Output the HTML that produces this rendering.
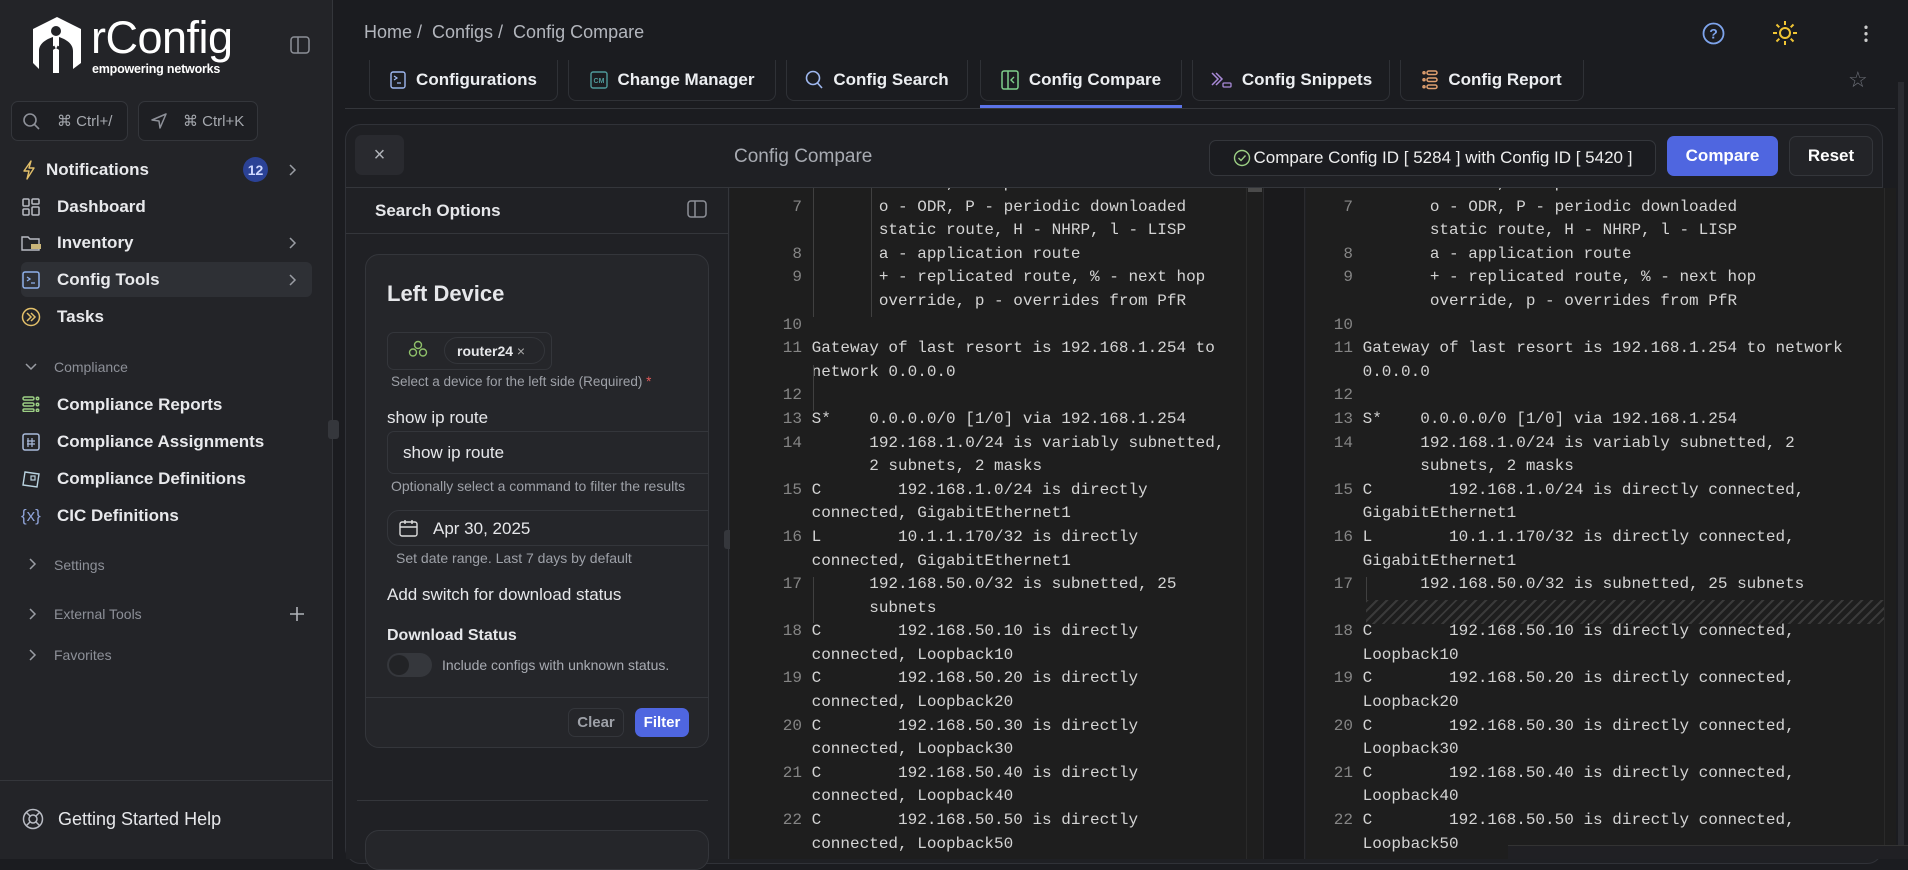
<!DOCTYPE html>
<html><head><meta charset="utf-8"><style>
*{box-sizing:border-box;margin:0;padding:0}
body{width:1908px;height:859px;overflow:hidden;background:#1b1c20;font-family:"Liberation Sans",sans-serif;color:#e6e7ea;position:relative}
.a{position:absolute}
.sb{left:0;top:0;width:333px;height:859px;background:#232428;border-right:1px solid #34363b}
.nav{left:57px;font-size:17px;font-weight:bold;color:#e8e9ec;transform:translateY(-50%)}
.ic{left:21px;transform:translateY(-50%)}
.sec{left:54px;font-size:14px;color:#8d9098;transform:translateY(-50%)}
.tab{top:60px;height:41px;border:1px solid #2f3136;border-top:none;border-radius:0 0 8px 8px;font-size:17px;font-weight:bold;color:#eceef1;display:flex;align-items:center;justify-content:center;gap:10px}
.code{font-family:"Liberation Mono",monospace;font-size:16px;line-height:23.6px;color:#d4d4d4;white-space:pre}
.ln{color:#858585;text-align:right;width:40px;display:inline-block}
.L .ln{width:72px}
.btn{border-radius:7px;display:flex;align-items:center;justify-content:center;font-weight:bold}
</style></head><body>
<svg width="0" height="0" style="position:absolute"><defs><path id="chv" d="M2 1 L7 6 L2 11" fill="none" stroke="#9a9da4" stroke-width="1.5"/></defs></svg>
<!-- sidebar -->
<div class="a sb"></div>
<svg class="a" style="left:29px;top:15px" width="56" height="60" viewBox="0 0 56 60"><path d="M28 2 L52 14 L52 48 L44 54 L44 36 C44 28 36 24 30 22 L30 58 L24 58 L24 22 C18 24 10 28 10 36 L10 54 L4 48 L4 14 Z" fill="#fff"/><circle cx="27" cy="16" r="5" fill="#232428"/><path d="M14 50 C14 38 22 34 26 32 M40 50 C40 38 32 34 28 32" stroke="#232428" stroke-width="3" fill="none"/></svg>
<div class="a" style="left:91px;top:12px;font-size:45px;color:#fff;letter-spacing:-0.5px">rConfig</div>
<div class="a" style="left:92px;top:62px;font-size:12.5px;color:#fff;font-weight:bold;letter-spacing:-0.2px">empowering networks</div>
<svg class="a" style="left:290px;top:36px" width="20" height="18" viewBox="0 0 20 18"><rect x="1" y="1" width="18" height="16" rx="3" fill="none" stroke="#8d9098" stroke-width="1.5"/><line x1="8" y1="1" x2="8" y2="17" stroke="#8d9098" stroke-width="1.5"/></svg>
<div class="a" style="left:11px;top:101px;width:117px;height:40px;border:1px solid #34363b;border-radius:7px;background:#1e1f23"></div>
<svg class="a" style="left:22px;top:112px" width="18" height="18"><circle cx="8" cy="8" r="6" fill="none" stroke="#8d9098" stroke-width="1.6"/><line x1="12.5" y1="12.5" x2="17" y2="17" stroke="#8d9098" stroke-width="1.6"/></svg>
<div class="a" style="left:57px;top:112px;font-size:15px;color:#a5a8ae">⌘ Ctrl+/</div>
<div class="a" style="left:138px;top:101px;width:120px;height:40px;border:1px solid #34363b;border-radius:7px;background:#1e1f23"></div>
<svg class="a" style="left:150px;top:112px" width="18" height="18"><path d="M16 2 L2 8 L9 9 L10 16 Z" fill="none" stroke="#8d9098" stroke-width="1.5" stroke-linejoin="round"/></svg>
<div class="a" style="left:183px;top:112px;font-size:15px;color:#a5a8ae">⌘ Ctrl+K</div>

<div class="a" style="left:21px;top:262px;width:291px;height:35px;background:#2e3035;border-radius:6px"></div>
<svg class="a" style="left:21px;top:160px" width="16" height="20"><path d="M10 1 L3 11 H8 L6 19 L13 8 H8 Z" fill="none" stroke="#e3c06a" stroke-width="1.4" stroke-linejoin="round"/></svg>
<div class="a nav" style="left:46px;top:170px">Notifications</div>
<div class="a" style="left:243px;top:157px;width:25px;height:25px;border-radius:50%;background:#2b4296;color:#cfd8ff;font-size:14px;display:flex;align-items:center;justify-content:center;font-weight:bold">12</div>
<svg class="a" style="left:288px;top:164px" width="10" height="12"><use href="#chv"/></svg>
<svg class="a" style="left:22px;top:198px" width="18" height="18"><g fill="none" stroke="#b9bcc4" stroke-width="1.5"><rect x="1" y="1" width="6" height="7" rx="1"/><rect x="10" y="1" width="7" height="5" rx="1"/><rect x="1" y="11" width="6" height="6" rx="1"/><rect x="10" y="9" width="7" height="8" rx="1"/></g></svg>
<div class="a nav" style="top:207px">Dashboard</div>
<svg class="a" style="left:21px;top:234px" width="21" height="18"><path d="M1 3 h6 l2 2 h9 v11 h-17z" fill="none" stroke="#b9bcc4" stroke-width="1.4"/><rect x="10" y="10" width="10" height="5" fill="#c9b57a"/></svg>
<div class="a nav" style="top:243px">Inventory</div>
<svg class="a" style="left:288px;top:237px" width="10" height="12"><use href="#chv"/></svg>
<svg class="a" style="left:22px;top:271px" width="18" height="18"><rect x="1" y="1" width="16" height="16" rx="2" fill="none" stroke="#8fb0ea" stroke-width="1.5"/><path d="M5 6 l3 2 -3 2 M9 12 h4" stroke="#8fb0ea" stroke-width="1.3" fill="none"/></svg>
<div class="a nav" style="top:280px">Config Tools</div>
<svg class="a" style="left:288px;top:274px" width="10" height="12"><use href="#chv"/></svg>
<svg class="a" style="left:21px;top:307px" width="20" height="20"><circle cx="10" cy="10" r="8.5" fill="none" stroke="#e3c06a" stroke-width="1.5"/><path d="M6 6 l4 4 -4 4 M10 6 l4 4 -4 4" stroke="#e3c06a" stroke-width="1.5" fill="none"/></svg>
<div class="a nav" style="top:317px">Tasks</div>

<svg class="a" style="left:25px;top:362px" width="12" height="10"><path d="M1 2 L6 7 L11 2" fill="none" stroke="#9a9da4" stroke-width="1.5"/></svg>
<div class="a sec" style="top:367px">Compliance</div>
<svg class="a" style="left:22px;top:396px" width="18" height="16"><g fill="none" stroke="#9ccf84" stroke-width="1.5"><rect x="1" y="1" width="11" height="3" rx="1.5"/><rect x="1" y="7" width="11" height="3" rx="1.5"/><rect x="1" y="13" width="11" height="2.5" rx="1.2"/><circle cx="15.5" cy="2.5" r="1.2"/><circle cx="15.5" cy="8.5" r="1.2"/><circle cx="15.5" cy="14.3" r="1.2"/></g></svg>
<div class="a nav" style="top:405px">Compliance Reports</div>
<svg class="a" style="left:22px;top:433px" width="18" height="18"><rect x="1" y="1" width="16" height="16" rx="2" fill="none" stroke="#a9bbdc" stroke-width="1.5"/><path d="M6 5 v9 M10 5 v9 M5 8 h8 M5 11 h8" stroke="#a9bbdc" stroke-width="1.2"/></svg>
<div class="a nav" style="top:442px">Compliance Assignments</div>
<svg class="a" style="left:22px;top:470px" width="18" height="18"><path d="M3 2 L17 4 L15 17 L1 15 Z" fill="none" stroke="#b9d3e0" stroke-width="1.4"/><rect x="9" y="6" width="4" height="4" fill="none" stroke="#b9d3e0" stroke-width="1.2"/></svg>
<div class="a nav" style="top:479px">Compliance Definitions</div>
<div class="a ic" style="top:516px;color:#8fa3d8;font-size:17px">{x}</div>
<div class="a nav" style="top:516px">CIC Definitions</div>
<svg class="a" style="left:28px;top:558px" width="10" height="12"><use href="#chv"/></svg>
<div class="a sec" style="top:565px">Settings</div>
<svg class="a" style="left:28px;top:608px" width="10" height="12"><use href="#chv"/></svg>
<div class="a sec" style="top:614px">External Tools</div>
<svg class="a" style="left:289px;top:606px" width="16" height="16"><path d="M8 1 v14 M1 8 h14" stroke="#b0b3b9" stroke-width="1.6"/></svg>
<svg class="a" style="left:28px;top:649px" width="10" height="12"><use href="#chv"/></svg>
<div class="a sec" style="top:655px">Favorites</div>
<div class="a" style="left:0;top:780px;width:333px;height:1px;background:#34363b"></div>
<svg class="a" style="left:22px;top:808px" width="22" height="22"><g fill="none" stroke="#b9bcc4" stroke-width="1.5"><circle cx="11" cy="11" r="9.5"/><circle cx="11" cy="11" r="4"/><path d="M4 4 l4 4 M18 4 l-4 4 M4 18 l4-4 M18 18 l-4-4"/></g></svg>
<div class="a" style="left:58px;top:809px;font-size:18px;color:#e6e7ea">Getting Started Help</div>

<!-- top bar -->
<div class="a" style="left:364px;top:22px;font-size:18px;color:#b3b6bd">Home /&nbsp; Configs /&nbsp; Config Compare</div>
<svg class="a" style="left:1702px;top:22px" width="23" height="23"><circle cx="11.5" cy="11.5" r="10" fill="none" stroke="#7ea4ec" stroke-width="1.8"/><text x="11.5" y="16.5" font-size="14" text-anchor="middle" fill="#7ea4ec" font-family="Liberation Sans" font-weight="bold">?</text></svg>
<svg class="a" style="left:1772px;top:20px" width="26" height="26" viewBox="0 0 26 26"><circle cx="13" cy="13" r="5" fill="none" stroke="#f0c534" stroke-width="2"/><g stroke="#f0c534" stroke-width="2"><path d="M13 1v4M13 21v4M1 13h4M21 13h4M4.5 4.5l2.8 2.8M18.7 18.7l2.8 2.8M4.5 21.5l2.8-2.8M18.7 7.3l2.8-2.8"/></g></svg>
<div class="a" style="left:1864px;top:24px;width:4px;height:19px;background:radial-gradient(circle,#ccc 1.6px,transparent 1.8px) 0 0/4px 6.5px"></div>

<div class="a tab" style="left:369px;width:189px"><svg width="16" height="18"><rect x="1" y="1" width="14" height="16" rx="2" fill="none" stroke="#9fb8f0" stroke-width="1.4"/><path d="M4 5 l3 2 -3 2 M7 12 h4" stroke="#9fb8f0" stroke-width="1.2" fill="none"/></svg>Configurations</div>
<div class="a tab" style="left:568px;width:208px"><svg width="18" height="18"><rect x="1" y="1" width="16" height="16" rx="2" fill="none" stroke="#4f9a9a" stroke-width="1.4"/><text x="9" y="12" font-size="7" text-anchor="middle" fill="#4f9a9a" font-family="Liberation Sans">CM</text></svg>Change Manager</div>
<div class="a tab" style="left:786px;width:182px"><svg width="18" height="20"><circle cx="8" cy="8" r="6.5" fill="none" stroke="#9fb8f0" stroke-width="1.6"/><line x1="12.5" y1="13" x2="17" y2="18" stroke="#9fb8f0" stroke-width="1.6"/></svg>Config Search</div>
<div class="a tab" style="left:980px;width:202px"><svg width="18" height="20"><rect x="1" y="1" width="16" height="18" rx="2" fill="none" stroke="#7fcf8a" stroke-width="1.5"/><line x1="7" y1="1" x2="7" y2="19" stroke="#7fcf8a" stroke-width="1.5"/><path d="M13 7 l-3 3 3 3" stroke="#7fcf8a" stroke-width="1.4" fill="none"/></svg>Config Compare</div>
<div class="a" style="left:980px;top:105px;width:202px;height:3px;background:#5b73e8"></div>
<div class="a tab" style="left:1192px;width:198px"><svg width="22" height="18"><path d="M2 2 l6 6 -6 6 M6 2 l6 6 -6 6" stroke="#a98ad8" stroke-width="1.5" fill="none"/><rect x="13" y="12" width="8" height="4" rx="1" fill="none" stroke="#a98ad8" stroke-width="1.3"/></svg>Config Snippets</div>
<div class="a tab" style="left:1400px;width:184px"><svg width="16" height="20"><g fill="none" stroke="#e0a070" stroke-width="1.5"><rect x="5" y="1" width="10" height="3.5" rx="1.7"/><rect x="5" y="8" width="10" height="3.5" rx="1.7"/><rect x="5" y="15" width="10" height="3.5" rx="1.7"/><circle cx="2" cy="2.8" r="1"/><circle cx="2" cy="9.8" r="1"/><circle cx="2" cy="16.8" r="1"/></g></svg>Config Report</div>
<div class="a" style="left:1848px;top:67px;font-size:22px;color:#6d7078">☆</div>
<div class="a" style="left:345px;top:108px;width:1550px;height:1px;background:#34363b"></div>
<div class="a" style="left:1898px;top:82px;width:6px;height:777px;background:#2a2b30"></div>

<!-- card -->
<div class="a" style="left:345px;top:124px;width:1538px;height:740px;border:1px solid #303238;border-radius:16px;background:#1f2024"></div>
<div class="a btn" style="left:355px;top:135px;width:49px;height:40px;background:#292a2f;color:#b0b3b9;font-weight:normal;font-size:20px">×</div>
<div class="a" style="left:734px;top:146px;font-size:19px;color:#a8abb2">Config Compare</div>
<div class="a btn" style="left:1209px;top:140px;width:447px;height:36px;border:1px solid #34363b;background:#1b1c20;font-weight:normal;font-size:17px;color:#eee;gap:3px"><svg width="18" height="18"><circle cx="9" cy="9" r="7.5" fill="none" stroke="#9ccf84" stroke-width="1.4"/><path d="M5.5 9 l2.5 2.5 4.5-5" stroke="#9ccf84" stroke-width="1.4" fill="none"/></svg>Compare Config ID [ 5284 ] with Config ID [ 5420 ]</div>
<div class="a btn" style="left:1667px;top:136px;width:111px;height:40px;background:#4f66e0;color:#fff;font-size:17px">Compare</div>
<div class="a btn" style="left:1789px;top:136px;width:84px;height:40px;border:1px solid #34363b;background:#232428;color:#fff;font-size:17px">Reset</div>
<div class="a" style="left:346px;top:187px;width:1536px;height:1px;background:#34363b"></div>

<!-- left panel -->
<div class="a" style="left:346px;top:188px;width:383px;height:671px;background:#202125;border-right:1px solid #34363b"></div>
<div class="a" style="left:375px;top:201px;font-size:17px;font-weight:bold">Search Options</div>
<svg class="a" style="left:687px;top:200px" width="20" height="18"><rect x="1" y="1" width="18" height="16" rx="3" fill="none" stroke="#8d9098" stroke-width="1.5"/><line x1="8" y1="1" x2="8" y2="17" stroke="#8d9098" stroke-width="1.5"/></svg>
<div class="a" style="left:346px;top:233px;width:383px;height:1px;background:#34363b"></div>
<div class="a" style="left:365px;top:254px;width:344px;height:494px;border:1px solid #34363b;border-radius:14px;background:#25262a;overflow:hidden">
 <div class="a" style="left:21px;top:26px;font-size:22px;font-weight:bold">Left Device</div>
 <div class="a" style="left:21px;top:77px;width:165px;height:38px;border:1px solid #34363b;border-radius:7px"></div>
 <svg class="a" style="left:42px;top:85px" width="20" height="18"><g fill="none" stroke="#8fc06a" stroke-width="1.4"><circle cx="10" cy="5" r="3.5"/><circle cx="5" cy="12.5" r="3.5"/><circle cx="15" cy="12.5" r="3.5"/></g></svg>
 <div class="a" style="left:78px;top:82px;width:101px;height:27px;border:1px solid #34363b;border-radius:14px;font-size:14px;font-weight:bold;padding:5px 0 0 12px">router24 <span style="font-weight:normal;color:#aaa">×</span></div>
 <div class="a" style="left:25px;top:119px;font-size:13.5px;color:#9ea1a8">Select a device for the left side (Required) <span style="color:#e05a5a">*</span></div>
 <div class="a" style="left:21px;top:153px;font-size:17px">show ip route</div>
 <div class="a" style="left:21px;top:176px;width:340px;height:43px;border:1px solid #34363b;border-radius:7px;font-size:17px;padding:11px 0 0 15px">show ip route</div>
 <div class="a" style="left:25px;top:223px;font-size:14px;color:#9ea1a8;white-space:nowrap">Optionally select a command to filter the results</div>
 <div class="a" style="left:21px;top:255px;width:340px;height:36px;border:1px solid #34363b;border-radius:12px;font-size:17px;padding:8px 0 0 45px">Apr 30, 2025</div>
 <svg class="a" style="left:33px;top:264px" width="19" height="18"><rect x="1" y="3" width="17" height="14" rx="2" fill="none" stroke="#ddd" stroke-width="1.4"/><path d="M1 8 h17 M6 1 v4 M13 1 v4" stroke="#ddd" stroke-width="1.4"/></svg>
 <div class="a" style="left:30px;top:295px;font-size:14px;color:#9ea1a8">Set date range. Last 7 days by default</div>
 <div class="a" style="left:21px;top:330px;font-size:17px">Add switch for download status</div>
 <div class="a" style="left:21px;top:372px;font-size:16px;font-weight:bold">Download Status</div>
 <div class="a" style="left:21px;top:398px;width:45px;height:24px;border-radius:12px;background:#35373c"><div style="position:absolute;left:2px;top:2px;width:20px;height:20px;border-radius:50%;background:#222326"></div></div>
 <div class="a" style="left:76px;top:402px;font-size:14px;color:#a8abb2">Include configs with unknown status.</div>
 <div class="a" style="left:0;top:442px;width:344px;height:1px;background:#34363b"></div>
 <div class="a btn" style="left:202px;top:453px;width:56px;height:29px;border:1px solid #34363b;color:#9ea1a8;font-size:15px">Clear</div>
 <div class="a btn" style="left:269px;top:453px;width:54px;height:29px;background:#4f66e0;color:#fff;font-size:15px">Filter</div>
</div>
<div class="a" style="left:357px;top:800px;width:351px;height:1px;background:#34363b"></div>
<div class="a" style="left:365px;top:830px;width:344px;height:40px;border:1px solid #34363b;border-radius:14px;background:#25262a"></div>
<div class="a" style="left:724px;top:530px;width:11px;height:19px;border-radius:3px;background:#35373c"></div>
<div class="a" style="left:328px;top:420px;width:11px;height:19px;border-radius:3px;background:#35373c"></div>

<!-- code panes -->
<div class="a" style="left:730px;top:188px;width:516px;height:671px;background:#1e1e1e;overflow:hidden">
<div class="a code L" style="left:0;top:-16px"><span class="ln"></span>        default, U - per-user static route
<span class="ln">7</span>        o - ODR, P - periodic downloaded
<span class="ln"></span>        static route, H - NHRP, l - LISP
<span class="ln">8</span>        a - application route
<span class="ln">9</span>        + - replicated route, % - next hop
<span class="ln"></span>        override, p - overrides from PfR
<span class="ln">10</span>
<span class="ln">11</span> Gateway of last resort is 192.168.1.254 to
<span class="ln"></span> network 0.0.0.0
<span class="ln">12</span>
<span class="ln">13</span> S*    0.0.0.0/0 [1/0] via 192.168.1.254
<span class="ln">14</span>       192.168.1.0/24 is variably subnetted,
<span class="ln"></span>       2 subnets, 2 masks
<span class="ln">15</span> C        192.168.1.0/24 is directly
<span class="ln"></span> connected, GigabitEthernet1
<span class="ln">16</span> L        10.1.1.170/32 is directly
<span class="ln"></span> connected, GigabitEthernet1
<span class="ln">17</span>       192.168.50.0/32 is subnetted, 25
<span class="ln"></span>       subnets
<span class="ln">18</span> C        192.168.50.10 is directly
<span class="ln"></span> connected, Loopback10
<span class="ln">19</span> C        192.168.50.20 is directly
<span class="ln"></span> connected, Loopback20
<span class="ln">20</span> C        192.168.50.30 is directly
<span class="ln"></span> connected, Loopback30
<span class="ln">21</span> C        192.168.50.40 is directly
<span class="ln"></span> connected, Loopback40
<span class="ln">22</span> C        192.168.50.50 is directly
<span class="ln"></span> connected, Loopback50</div>
<div class="a" style="left:83px;top:0;width:1px;height:129px;background:#404040"></div>
<div class="a" style="left:141px;top:0;width:1px;height:129px;background:#404040"></div>
<div class="a" style="left:83px;top:177px;width:1px;height:46px;background:#404040"></div>
<div class="a" style="left:83px;top:389px;width:1px;height:46px;background:#404040"></div>
</div>
<div class="a" style="left:1246px;top:188px;width:17px;height:671px;background:#1e1e1e;border-left:1px solid #2a2a2a"></div>
<div class="a" style="left:1248px;top:188px;width:14px;height:4px;background:#4a4a4a"></div>
<div class="a" style="left:1263px;top:188px;width:42px;height:671px;background:#1a1a1c;border-left:1px solid #2b2b2e;border-right:1px solid #2b2b2e"></div>

<div class="a" style="left:1306px;top:188px;width:578px;height:671px;background:#1e1e1e;overflow:hidden">
<div class="a" style="left:60px;top:412px;width:518px;height:24px;background:repeating-linear-gradient(135deg,#3a3a3a 0 2px,#1e1e1e 2px 7px)"></div>
<div class="a code" style="left:7px;top:-16px"><span class="ln"></span>        default, U - per-user static route
<span class="ln">7</span>        o - ODR, P - periodic downloaded
<span class="ln"></span>        static route, H - NHRP, l - LISP
<span class="ln">8</span>        a - application route
<span class="ln">9</span>        + - replicated route, % - next hop
<span class="ln"></span>        override, p - overrides from PfR
<span class="ln">10</span>
<span class="ln">11</span> Gateway of last resort is 192.168.1.254 to network
<span class="ln"></span> 0.0.0.0
<span class="ln">12</span>
<span class="ln">13</span> S*    0.0.0.0/0 [1/0] via 192.168.1.254
<span class="ln">14</span>       192.168.1.0/24 is variably subnetted, 2
<span class="ln"></span>       subnets, 2 masks
<span class="ln">15</span> C        192.168.1.0/24 is directly connected,
<span class="ln"></span> GigabitEthernet1
<span class="ln">16</span> L        10.1.1.170/32 is directly connected,
<span class="ln"></span> GigabitEthernet1
<span class="ln">17</span>       192.168.50.0/32 is subnetted, 25 subnets

<span class="ln">18</span> C        192.168.50.10 is directly connected,
<span class="ln"></span> Loopback10
<span class="ln">19</span> C        192.168.50.20 is directly connected,
<span class="ln"></span> Loopback20
<span class="ln">20</span> C        192.168.50.30 is directly connected,
<span class="ln"></span> Loopback30
<span class="ln">21</span> C        192.168.50.40 is directly connected,
<span class="ln"></span> Loopback40
<span class="ln">22</span> C        192.168.50.50 is directly connected,
<span class="ln"></span> Loopback50</div>
<div class="a" style="left:60px;top:389px;width:1px;height:23px;background:#404040"></div>
</div>
<div class="a" style="left:1884px;top:188px;width:12px;height:671px;background:#1e1e1e;border-left:1px solid #2a2a2a"></div>
<div class="a" style="left:1508px;top:845px;width:400px;height:14px;background:#202024;border-top:1px solid #333"></div>
</body></html>
